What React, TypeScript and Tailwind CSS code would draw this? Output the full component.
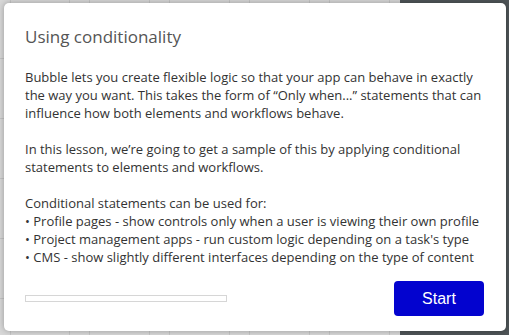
const COLUMNS = [10, 59, 20, 60, 20, 60, 20, 60, 20, 60, 11];

const BODY = [
  [
    "Bubble lets you create flexible logic so that your app can behave in exactly",
    "the way you want. This takes the form of “Only when...” statements that can",
    "influence how both elements and workflows behave.",
  ],
  [
    "In this lesson, we’re going to get a sample of this by applying conditional",
    "statements to elements and workflows.",
  ],
  [
    "Conditional statements can be used for:",
    "• Profile pages - show controls only when a user is viewing their own profile",
    "• Project management apps - run custom logic depending on a task's type",
    "• CMS - show slightly different interfaces depending on the type of content",
  ],
];

export default function App() {
  return (
    <div className="relative w-[509px] h-[335px] overflow-hidden bg-[#d8d8d8]">
      {/* Editor canvas behind the modal */}
      <div className="flex h-full">
        <div className="flex h-full w-[400px]">
          {COLUMNS.map((w, i) => (
            <div
              key={i}
              className={`h-full shrink-0 ${i === 0 ? "" : "border-l border-[#c6c6c6]"}`}
              style={{ width: w }}
            >
              {i === 0 && (
                <div className="flex flex-col pt-[58px] gap-[59px]">
                  {[0, 1, 2, 3, 4].map((r) => (
                    <div key={r} className="h-px bg-[#c4c4c4]" />
                  ))}
                </div>
              )}
            </div>
          ))}
        </div>
        <div className="flex-1 h-full bg-[#4f5558]" />
      </div>

      {/* Lesson modal */}
      <div className="absolute left-[4px] top-[3px] w-[502px] h-[328px] rounded-[5px] bg-white shadow-[0_0_6px_rgba(0,0,0,0.3)] flex flex-col px-[21px] pt-[22px] pb-[15px] font-['Open_Sans',sans-serif]">
        <h1 className="text-[17px] leading-[23px] text-[#555555]">Using conditionality</h1>

        <div className="mt-[20px] flex flex-col gap-[18px] text-[13px] leading-[18px] text-[#333333]">
          {BODY.map((para, i) => (
            <p key={i} className="whitespace-nowrap">
              {para.map((line, j) => (
                <span key={j} className="block">
                  {line}
                </span>
              ))}
            </p>
          ))}
        </div>

        <div className="mt-auto flex items-center justify-between pr-[1px]">
          <div className="w-[202px] h-[7px] border border-[#d6d6d6] bg-white" />
          <button className="w-[90px] h-[35px] rounded-[4px] bg-[#0303cf] text-white text-[16px] font-['Liberation_Sans',Arial,sans-serif]">
            Start
          </button>
        </div>
      </div>
    </div>
  );
}
